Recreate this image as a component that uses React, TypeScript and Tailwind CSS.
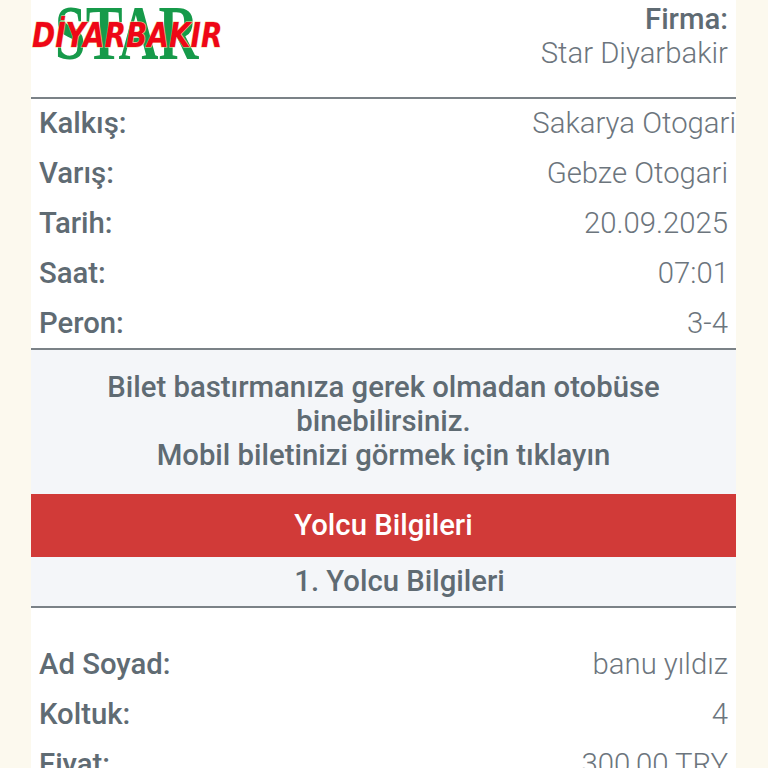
const ROUTE_ROWS = [
  { label: 'Kalkış:', value: 'Sakarya Otogari', valueClass: 'pr-0' },
  { label: 'Varış:', value: 'Gebze Otogari', valueClass: 'pr-2' },
  { label: 'Tarih:', value: '20.09.2025', valueClass: 'pr-2' },
  { label: 'Saat:', value: '07:01', valueClass: 'pr-[7px]' },
  { label: 'Peron:', value: '3-4', valueClass: 'pr-2' },
];

const PASSENGER_ROWS = [
  { label: 'Ad Soyad:', value: 'banu yıldız', valueClass: 'pr-2' },
  { label: 'Koltuk:', value: '4', valueClass: 'pr-2' },
  { label: 'Fiyat:', value: '300,00 TRY', valueClass: 'pr-2' },
];

function Row({ label, value, valueClass }: { label: string; value: string; valueClass: string }) {
  return (
    <div className="flex h-[50px] items-center justify-between pb-0.5">
      <span className="pl-2 font-medium text-[#5f6b73]">{label}</span>
      <span className={`font-light ${valueClass}`}>{value}</span>
    </div>
  );
}

function Logo() {
  return (
    <div className="relative h-[64px] w-[200px]">
      <span className="absolute left-[24px] top-[-7px] origin-left scale-x-[0.7] font-['Liberation_Serif',serif] text-[79px] font-bold leading-[80px] text-[#169a4a]">
        STAR
      </span>
      <span className="absolute left-[1px] top-[15px] origin-left scale-x-[0.82] whitespace-nowrap font-['DejaVu_Sans',sans-serif] text-[34px] font-bold italic leading-[40px] text-[#ee0716] [-webkit-text-stroke:1px_#f3d9a4] [paint-order:stroke_fill]">
        DİYARBAKIR
      </span>
    </div>
  );
}

export default function App() {
  return (
    <div className="h-[768px] overflow-hidden bg-[#fcf9ee] pl-[31px] pr-[32px] font-['Roboto',sans-serif] text-[29.3px] leading-[34px] text-[#6c757d]">
      <div className="bg-white">
        <div className="flex h-[99px] justify-between border-b-2 border-[#7b8287]">
          <Logo />
          <div className="pr-2 pt-[2px] text-right">
            <div className="font-medium text-[#5f6b73]">Firma:</div>
            <div className="font-light">Star Diyarbakir</div>
          </div>
        </div>

        <div className="h-[251px] border-b-2 border-[#7b8287]">
          {ROUTE_ROWS.map((row) => (
            <Row key={row.label} {...row} />
          ))}
        </div>

        <div className="bg-[#f4f6f9] px-8 pb-[22px] pt-[20px] text-center font-medium text-[#5f6b73]">
          Bilet bastırmanıza gerek olmadan otobüse binebilirsiniz.
          <br />
          Mobil biletinizi görmek için tıklayın
        </div>

        <div className="flex h-[63px] items-center justify-center bg-[#d13a38] pb-0.5 font-medium text-white">
          Yolcu Bilgileri
        </div>

        <div className="flex h-[51px] items-center justify-center border-b-2 border-[#7b8287] bg-[#f4f6f9] pb-0.5 pl-8 font-medium text-[#5f6b73]">
          1. Yolcu Bilgileri
        </div>

        <div className="pt-[32px]">
          {PASSENGER_ROWS.map((row) => (
            <Row key={row.label} {...row} />
          ))}
        </div>
      </div>
    </div>
  );
}
